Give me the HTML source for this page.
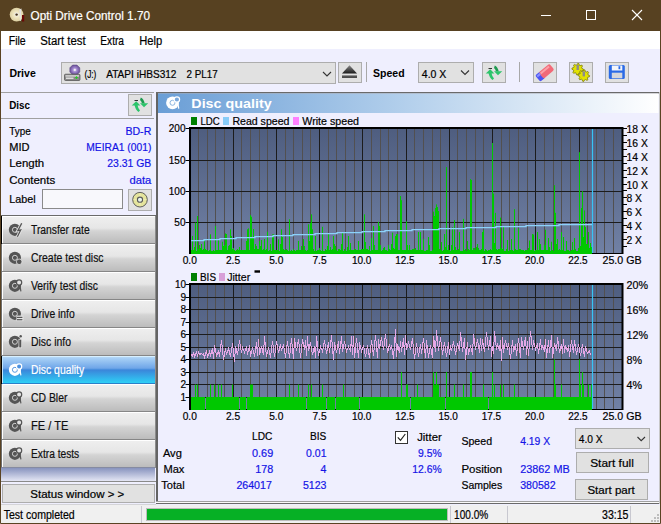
<!DOCTYPE html>
<html><head><meta charset="utf-8"><style>
html,body{margin:0;padding:0;width:661px;height:524px;overflow:hidden;background:#efeffe;}
svg{display:block;}
</style></head><body><svg width="661" height="524" viewBox="0 0 661 524" font-family='"Liberation Sans", sans-serif'><defs>
<linearGradient id="gBtn" x1="0" y1="0" x2="0" y2="1">
 <stop offset="0" stop-color="#efefef"/><stop offset="0.45" stop-color="#e6e6e6"/><stop offset="0.55" stop-color="#d4d4d4"/><stop offset="1" stop-color="#bcbcbc"/>
</linearGradient>
<linearGradient id="gSel" x1="0" y1="0" x2="0" y2="1">
 <stop offset="0" stop-color="#c2e0fa"/><stop offset="0.08" stop-color="#a8d0f6"/><stop offset="0.45" stop-color="#6fa6e8"/><stop offset="0.52" stop-color="#3b86da"/><stop offset="1" stop-color="#2ed0f6"/>
</linearGradient>
<linearGradient id="gHdr" x1="0" y1="0" x2="1" y2="0">
 <stop offset="0" stop-color="#6a9ed6"/><stop offset="0.5" stop-color="#b4d0ec"/><stop offset="1" stop-color="#ffffff"/>
</linearGradient>
<linearGradient id="gPlot" x1="0" y1="0" x2="0" y2="1">
 <stop offset="0" stop-color="#4e5d7f"/><stop offset="1" stop-color="#7181a5"/>
</linearGradient>
<linearGradient id="gSide" x1="0" y1="0" x2="0" y2="1">
 <stop offset="0" stop-color="#8490bc"/><stop offset="1" stop-color="#e4e6f4"/>
</linearGradient>
</defs>
<rect x="0" y="0" width="661" height="524" fill="#efeffe" />
<rect x="0" y="0" width="661" height="31" fill="#574121" />
<text x="30.5" y="20.2" font-size="12" fill="#ffffff" font-weight="400" text-anchor="start" textLength="119.5" lengthAdjust="spacingAndGlyphs" stroke="#ffffff" stroke-width="0.2" >Opti Drive Control 1.70</text>
<defs><radialGradient id="gCd" cx="0.5" cy="0.5" r="0.5"><stop offset="0" stop-color="#fff8dc"/><stop offset="1" stop-color="#dccfa0"/></radialGradient></defs>
<circle cx="16.6" cy="14.6" r="6.9" fill="url(#gCd)"/><circle cx="16.6" cy="14.6" r="2" fill="#e8e8e8"/><circle cx="16.6" cy="14.6" r="1.2" fill="#4a3418"/>
<path d="M19.2,9.5 L21.5,8.5 L21.2,12 L20.8,21 L19.8,21 L19.6,12 Z" fill="#e4e4e4"/><rect x="22" y="15" width="2.2" height="6.5" fill="#6a0808"/>
<line x1="541" y1="15.5" x2="551" y2="15.5" stroke="#ffffff" stroke-width="1" />
<rect x="586.5" y="10.5" width="9" height="9" fill="none" stroke="#ffffff" stroke-width="1" />
<line x1="632" y1="10" x2="642" y2="20" stroke="#ffffff" stroke-width="1.1" />
<line x1="642" y1="10" x2="632" y2="20" stroke="#ffffff" stroke-width="1.1" />
<rect x="0" y="31" width="661" height="18" fill="#ffffff" />
<text x="8.7" y="45" font-size="12" fill="#000" font-weight="400" text-anchor="start" textLength="17" lengthAdjust="spacingAndGlyphs" stroke="#000" stroke-width="0.2" >File</text>
<text x="40.2" y="45" font-size="12" fill="#000" font-weight="400" text-anchor="start" textLength="45.5" lengthAdjust="spacingAndGlyphs" stroke="#000" stroke-width="0.2" >Start test</text>
<text x="100.3" y="45" font-size="12" fill="#000" font-weight="400" text-anchor="start" textLength="23.7" lengthAdjust="spacingAndGlyphs" stroke="#000" stroke-width="0.2" >Extra</text>
<text x="139.3" y="45" font-size="12" fill="#000" font-weight="400" text-anchor="start" textLength="23" lengthAdjust="spacingAndGlyphs" stroke="#000" stroke-width="0.2" >Help</text>
<text x="9.4" y="76.9" font-size="11.3" fill="#000" font-weight="700" text-anchor="start" textLength="26.4" lengthAdjust="spacingAndGlyphs" >Drive</text>
<rect x="61.5" y="62.5" width="274" height="21" fill="#e1e1e1" stroke="#adadad" stroke-width="1" />
<text x="84.4" y="77.6" font-size="10.6" fill="#000" font-weight="400" text-anchor="start" textLength="12" lengthAdjust="spacingAndGlyphs" stroke="#000" stroke-width="0.2" >(J:)</text>
<text x="106.2" y="77.6" font-size="10.6" fill="#000" font-weight="400" text-anchor="start" textLength="70.3" lengthAdjust="spacingAndGlyphs" stroke="#000" stroke-width="0.2" >ATAPI iHBS312</text>
<text x="186.5" y="77.6" font-size="10.6" fill="#000" font-weight="400" text-anchor="start" textLength="31.2" lengthAdjust="spacingAndGlyphs" stroke="#000" stroke-width="0.2" >2 PL17</text>
<polyline points="323,72 327,76 331,72" fill="none" stroke="#333" stroke-width="1.1"/>
<defs><radialGradient id="gPur" cx="0.5" cy="0.5" r="0.5"><stop offset="0" stop-color="#d8c8f0"/><stop offset="0.5" stop-color="#9a80c8"/><stop offset="1" stop-color="#6a5098"/></radialGradient><linearGradient id="gEj" x1="0" y1="0" x2="0" y2="1"><stop offset="0" stop-color="#8a8a8a"/><stop offset="1" stop-color="#1a1a1a"/></linearGradient></defs>
<polygon points="72.6,65 77,65 79.8,67.8 79.8,72 77,74.8 72.6,74.8 69.8,72 69.8,67.8" fill="url(#gPur)" stroke="#5a4a80" stroke-width="0.5"/><circle cx="74.8" cy="69.9" r="1.1" fill="#f4f4f4"/>
<rect x="64.5" y="74.2" width="15.5" height="6.3" rx="1" fill="#8a8a8a" stroke="#4a4a4a" stroke-width="0.7"/><rect x="65.5" y="75" width="13.5" height="1.8" fill="#c8c8c8"/><rect x="66" y="77.6" width="7.5" height="1.2" fill="#f0f0f0"/><path d="M76.5,76.3 v2.6 M75.2,77.6 h2.6" stroke="#20d020" stroke-width="1"/>
<rect x="338.5" y="62.5" width="23" height="20" fill="#e1e1e1" stroke="#adadad" stroke-width="1" />
<polygon points="342,73.5 349.5,65.2 357,73.5" fill="url(#gEj)"/><rect x="342" y="75.2" width="15" height="2.6" fill="url(#gEj)"/>
<line x1="366.5" y1="62" x2="366.5" y2="82" stroke="#a8a8a8" stroke-width="1" />
<text x="373" y="76.9" font-size="11.3" fill="#000" font-weight="700" text-anchor="start" textLength="31.6" lengthAdjust="spacingAndGlyphs" >Speed</text>
<rect x="418.5" y="62.5" width="55" height="20" fill="#e1e1e1" stroke="#adadad" stroke-width="1" />
<text x="421.8" y="77.6" font-size="10.6" fill="#000" font-weight="400" text-anchor="start" textLength="24.5" lengthAdjust="spacingAndGlyphs" stroke="#000" stroke-width="0.2" >4.0 X</text>
<polyline points="461,70.5 465,74.5 469,70.5" fill="none" stroke="#333" stroke-width="1.1"/>
<rect x="482.5" y="62.5" width="23" height="20" fill="#e1e1e1" stroke="#adadad" stroke-width="1" />
<path d="M488.5,73 Q489.5,78 492.5,80 L494,78.5 Q492,76.5 491.5,73 Z" fill="#2cc46a"/>
<polygon points="485.7,73.4 490.2,69.2 494.4,73.4" fill="#2cc46a"/>
<path d="M494.8,65.5 Q497.5,66.5 498.8,71.5 L496,71.5 Q495.5,69 494,68 Z" fill="#1e9a50"/>
<polygon points="494,71.2 502.2,71.2 498,75.2" fill="#2cc46a"/>
<rect x="488.5" y="68" width="3.5" height="1" fill="#333"/>
<line x1="519.5" y1="62" x2="519.5" y2="82" stroke="#a8a8a8" stroke-width="1" />
<rect x="533.5" y="62.5" width="23" height="20" fill="#e1e1e1" stroke="#adadad" stroke-width="1" />
<g transform="rotate(-40 545 72.5)"><rect x="535.5" y="68.5" width="7" height="8" rx="1.5" fill="#4a54f4"/><rect x="540" y="68.5" width="14" height="8" rx="2" fill="#f26a78"/><rect x="541" y="69.5" width="11" height="2" fill="#fba0a8"/><rect x="536.5" y="69.5" width="4" height="2" fill="#8a90ff"/></g>
<rect x="569.5" y="62.5" width="23" height="20" fill="#e1e1e1" stroke="#adadad" stroke-width="1" />
<polygon points="583.50,69.20 583.39,70.33 581.67,70.85 581.28,71.59 581.80,73.30 580.92,74.02 579.35,73.17 578.54,73.42 577.70,75.00 576.57,74.89 576.05,73.17 575.31,72.78 573.60,73.30 572.88,72.42 573.73,70.85 573.48,70.04 571.90,69.20 572.01,68.07 573.73,67.55 574.12,66.81 573.60,65.10 574.48,64.38 576.05,65.23 576.86,64.98 577.70,63.40 578.83,63.51 579.35,65.23 580.09,65.62 581.80,65.10 582.52,65.98 581.67,67.55 581.92,68.36" fill="#e2e200" stroke="#707000" stroke-width="0.7"/>
<rect x="576.5" y="65.0" width="2.4" height="5" fill="#8c8c8c"/>
<polygon points="589.60,75.60 589.49,76.73 587.77,77.25 587.38,77.99 587.90,79.70 587.02,80.42 585.45,79.57 584.64,79.82 583.80,81.40 582.67,81.29 582.15,79.57 581.41,79.18 579.70,79.70 578.98,78.82 579.83,77.25 579.58,76.44 578.00,75.60 578.11,74.47 579.83,73.95 580.22,73.21 579.70,71.50 580.58,70.78 582.15,71.63 582.96,71.38 583.80,69.80 584.93,69.91 585.45,71.63 586.19,72.02 587.90,71.50 588.62,72.38 587.77,73.95 588.02,74.76" fill="#e2e200" stroke="#707000" stroke-width="0.7"/>
<rect x="582.5999999999999" y="71.39999999999999" width="2.4" height="5" fill="#8c8c8c"/>
<rect x="605.5" y="62.5" width="23" height="20" fill="#e1e1e1" stroke="#adadad" stroke-width="1" />
<rect x="608.8" y="65" width="16" height="14" rx="1.5" fill="#2a6ae6"/><rect x="611.8" y="65.5" width="10.5" height="5" fill="#f4f6fa"/><rect x="618.5" y="66.2" width="1.8" height="3" fill="#2a6ae6"/><rect x="611.8" y="72.7" width="10.5" height="5.6" fill="#d4d6dc"/>
<line x1="0" y1="92.5" x2="154" y2="92.5" stroke="#a0a0a0" stroke-width="1" />
<text x="9.2" y="108.9" font-size="11.3" fill="#000" font-weight="700" text-anchor="start" textLength="20.8" lengthAdjust="spacingAndGlyphs" >Disc</text>
<rect x="128.5" y="94.5" width="23" height="21" fill="#e1e1e1" stroke="#adadad" stroke-width="1" />
<path d="M134.5,105 Q135.5,110 138.5,112 L140,110.5 Q138,108.5 137.5,105 Z" fill="#2cc46a"/>
<polygon points="131.7,105.4 136.2,101.2 140.4,105.4" fill="#2cc46a"/>
<path d="M140.8,97.5 Q143.5,98.5 144.8,103.5 L142,103.5 Q141.5,101 140,100 Z" fill="#1e9a50"/>
<polygon points="140,103.2 148.2,103.2 144,107.2" fill="#2cc46a"/>
<rect x="134.5" y="100" width="3.5" height="1" fill="#333"/>
<line x1="0" y1="118.5" x2="154" y2="118.5" stroke="#a0a0a0" stroke-width="1" />
<text x="9.2" y="134.8" font-size="10.8" fill="#000" font-weight="400" text-anchor="start" textLength="21.5" lengthAdjust="spacingAndGlyphs" stroke="#000" stroke-width="0.2" >Type</text>
<text x="151.3" y="134.8" font-size="10.8" fill="#1414e6" font-weight="400" text-anchor="end" textLength="25.9" lengthAdjust="spacingAndGlyphs" stroke="#1414e6" stroke-width="0.2" >BD-R</text>
<text x="9.2" y="150.5" font-size="10.8" fill="#000" font-weight="400" text-anchor="start" textLength="20.3" lengthAdjust="spacingAndGlyphs" stroke="#000" stroke-width="0.2" >MID</text>
<text x="151.3" y="150.5" font-size="10.8" fill="#1414e6" font-weight="400" text-anchor="end" textLength="65" lengthAdjust="spacingAndGlyphs" stroke="#1414e6" stroke-width="0.2" >MEIRA1 (001)</text>
<text x="9.2" y="167" font-size="10.8" fill="#000" font-weight="400" text-anchor="start" textLength="35" lengthAdjust="spacingAndGlyphs" stroke="#000" stroke-width="0.2" >Length</text>
<text x="151.3" y="167" font-size="10.8" fill="#1414e6" font-weight="400" text-anchor="end" textLength="44" lengthAdjust="spacingAndGlyphs" stroke="#1414e6" stroke-width="0.2" >23.31 GB</text>
<text x="9.2" y="183.7" font-size="10.8" fill="#000" font-weight="400" text-anchor="start" textLength="46" lengthAdjust="spacingAndGlyphs" stroke="#000" stroke-width="0.2" >Contents</text>
<text x="151.3" y="183.7" font-size="10.8" fill="#1414e6" font-weight="400" text-anchor="end" textLength="21.8" lengthAdjust="spacingAndGlyphs" stroke="#1414e6" stroke-width="0.2" >data</text>
<text x="9.2" y="202.6" font-size="10.8" fill="#000" font-weight="400" text-anchor="start" textLength="26.4" lengthAdjust="spacingAndGlyphs" stroke="#000" stroke-width="0.2" >Label</text>
<rect x="42.5" y="189.5" width="80" height="19" fill="#f8f8fc" stroke="#8a8a8a" stroke-width="1" />
<rect x="128.5" y="189.5" width="23" height="21" fill="#e1e1e1" stroke="#adadad" stroke-width="1" />
<circle cx="140" cy="199.7" r="7.3" fill="#e4e49c" stroke="#505050" stroke-width="0.9"/><path d="M140,192.4 L141.5,199.7 L140,207 L138.5,199.7 Z M132.7,199.7 L140,198.2 L147.3,199.7 L140,201.2 Z" fill="#f6f6c8" opacity="0.6"/><circle cx="140" cy="199.7" r="2.6" fill="#e8f4e8" stroke="#5a5a5a" stroke-width="1.1"/>
<line x1="0" y1="215.5" x2="156" y2="215.5" stroke="#6a6a6a" stroke-width="1" />
<rect x="2" y="216" width="153" height="27" fill="url(#gBtn)" />
<rect x="2" y="216" width="153" height="1" fill="#ffffff" />
<rect x="2" y="216" width="1" height="27" fill="#ffffff" />
<rect x="1" y="243" width="154" height="1" fill="#868686" />
<rect x="1" y="216" width="1" height="28" fill="#000" />
<text x="31" y="233.8" font-size="12" fill="#101010" font-weight="400" text-anchor="start" textLength="58.7" lengthAdjust="spacingAndGlyphs" stroke="#101010" stroke-width="0.2" >Transfer rate</text>
<circle cx="14.9" cy="229.8" r="6.1" fill="#555555"/>
<circle cx="14.9" cy="229.8" r="2.5" fill="none" stroke="#d0d0d0" stroke-width="1"/>
<path d="M21.7,223.3 L17.9,230.60000000000002 L20.7,230.0 L17.4,236.8" fill="none" stroke="#e4e4e4" stroke-width="3"/><path d="M21.7,223.3 L17.9,230.60000000000002 L20.7,230.0 L17.4,236.8" fill="none" stroke="#555555" stroke-width="1.3"/>
<rect x="2" y="244" width="153" height="27" fill="url(#gBtn)" />
<rect x="2" y="244" width="153" height="1" fill="#ffffff" />
<rect x="2" y="244" width="1" height="27" fill="#ffffff" />
<rect x="1" y="271" width="154" height="1" fill="#868686" />
<rect x="1" y="244" width="1" height="28" fill="#6e6e6e" />
<text x="31" y="261.8" font-size="12" fill="#101010" font-weight="400" text-anchor="start" textLength="72.6" lengthAdjust="spacingAndGlyphs" stroke="#101010" stroke-width="0.2" >Create test disc</text>
<circle cx="14.9" cy="257.8" r="6.1" fill="#555555"/>
<circle cx="14.9" cy="257.8" r="2.5" fill="none" stroke="#d0d0d0" stroke-width="1"/>
<circle cx="19.2" cy="261.8" r="2.8" fill="#555555" stroke="#e4e4e4" stroke-width="0.8"/>
<rect x="2" y="272" width="153" height="27" fill="url(#gBtn)" />
<rect x="2" y="272" width="153" height="1" fill="#ffffff" />
<rect x="2" y="272" width="1" height="27" fill="#ffffff" />
<rect x="1" y="299" width="154" height="1" fill="#868686" />
<rect x="1" y="272" width="1" height="28" fill="#6e6e6e" />
<text x="31" y="289.8" font-size="12" fill="#101010" font-weight="400" text-anchor="start" textLength="66.9" lengthAdjust="spacingAndGlyphs" stroke="#101010" stroke-width="0.2" >Verify test disc</text>
<circle cx="14.9" cy="285.8" r="6.1" fill="#555555"/>
<circle cx="14.9" cy="285.8" r="2.5" fill="none" stroke="#d0d0d0" stroke-width="1"/>
<circle cx="19.1" cy="282.5" r="2.6" fill="#e4e4e4" stroke="#555555" stroke-width="1.2"/>
<line x1="19.9" y1="285.3" x2="20.9" y2="291.3" stroke="#555555" stroke-width="1.2"/>
<rect x="2" y="300" width="153" height="27" fill="url(#gBtn)" />
<rect x="2" y="300" width="153" height="1" fill="#ffffff" />
<rect x="2" y="300" width="1" height="27" fill="#ffffff" />
<rect x="1" y="327" width="154" height="1" fill="#868686" />
<rect x="1" y="300" width="1" height="28" fill="#6e6e6e" />
<text x="31" y="317.8" font-size="12" fill="#101010" font-weight="400" text-anchor="start" textLength="43.7" lengthAdjust="spacingAndGlyphs" stroke="#101010" stroke-width="0.2" >Drive info</text>
<circle cx="14.9" cy="313.8" r="6.1" fill="#555555"/>
<circle cx="14.9" cy="313.8" r="2.5" fill="none" stroke="#d0d0d0" stroke-width="1"/>
<rect x="16.4" y="315.6" width="7" height="5.5" fill="#e4e4e4"/><rect x="16.9" y="316.8" width="5.5" height="1.2" fill="#555555"/><rect x="16.9" y="319.1" width="5.5" height="1.2" fill="#555555"/>
<rect x="2" y="328" width="153" height="27" fill="url(#gBtn)" />
<rect x="2" y="328" width="153" height="1" fill="#ffffff" />
<rect x="2" y="328" width="1" height="27" fill="#ffffff" />
<rect x="1" y="355" width="154" height="1" fill="#868686" />
<rect x="1" y="328" width="1" height="28" fill="#6e6e6e" />
<text x="31" y="345.8" font-size="12" fill="#101010" font-weight="400" text-anchor="start" textLength="40" lengthAdjust="spacingAndGlyphs" stroke="#101010" stroke-width="0.2" >Disc info</text>
<circle cx="14.9" cy="341.8" r="6.1" fill="#555555"/>
<circle cx="14.9" cy="341.8" r="2.5" fill="none" stroke="#d0d0d0" stroke-width="1"/>
<rect x="18.9" y="339.3" width="2.8" height="8.5" fill="#555555" stroke="#e4e4e4" stroke-width="0.7"/><circle cx="20.7" cy="336.3" r="1.2" fill="#555555"/>
<rect x="2" y="356" width="153" height="27" fill="url(#gSel)" />
<rect x="2" y="356" width="153" height="1" fill="#d8f0ff" />
<rect x="2" y="356" width="1" height="27" fill="#c0e4fc" />
<rect x="1" y="383" width="154" height="1" fill="#2a80c8" />
<rect x="1" y="356" width="1" height="28" fill="#000" />
<text x="31" y="373.8" font-size="12" fill="#ffffff" font-weight="400" text-anchor="start" textLength="53.2" lengthAdjust="spacingAndGlyphs" stroke="#ffffff" stroke-width="0.2" >Disc quality</text>
<circle cx="14.9" cy="369.8" r="6.1" fill="#ffffff"/>
<circle cx="14.9" cy="369.8" r="2.5" fill="none" stroke="#5a9ae0" stroke-width="1"/>
<circle cx="19.1" cy="366.5" r="2.6" fill="#4a90e0" stroke="#ffffff" stroke-width="1.2"/>
<line x1="19.9" y1="369.3" x2="20.9" y2="375.3" stroke="#ffffff" stroke-width="1.2"/>
<rect x="2" y="384" width="153" height="27" fill="url(#gBtn)" />
<rect x="2" y="384" width="153" height="1" fill="#ffffff" />
<rect x="2" y="384" width="1" height="27" fill="#ffffff" />
<rect x="1" y="411" width="154" height="1" fill="#868686" />
<rect x="1" y="384" width="1" height="28" fill="#6e6e6e" />
<text x="31" y="401.8" font-size="12" fill="#101010" font-weight="400" text-anchor="start" textLength="36.4" lengthAdjust="spacingAndGlyphs" stroke="#101010" stroke-width="0.2" >CD Bler</text>
<circle cx="14.9" cy="397.8" r="6.1" fill="#555555"/>
<circle cx="14.9" cy="397.8" r="2.5" fill="none" stroke="#d0d0d0" stroke-width="1"/>
<circle cx="19.1" cy="394.5" r="2.6" fill="#e4e4e4" stroke="#555555" stroke-width="1.2"/>
<line x1="19.9" y1="397.3" x2="20.9" y2="403.3" stroke="#555555" stroke-width="1.2"/>
<rect x="2" y="412" width="153" height="27" fill="url(#gBtn)" />
<rect x="2" y="412" width="153" height="1" fill="#ffffff" />
<rect x="2" y="412" width="1" height="27" fill="#ffffff" />
<rect x="1" y="439" width="154" height="1" fill="#868686" />
<rect x="1" y="412" width="1" height="28" fill="#6e6e6e" />
<text x="31" y="429.8" font-size="12" fill="#101010" font-weight="400" text-anchor="start" textLength="37.4" lengthAdjust="spacingAndGlyphs" stroke="#101010" stroke-width="0.2" >FE / TE</text>
<circle cx="14.9" cy="425.8" r="6.1" fill="#555555"/>
<circle cx="14.9" cy="425.8" r="2.5" fill="none" stroke="#d0d0d0" stroke-width="1"/>
<circle cx="19.1" cy="422.5" r="2.6" fill="#e4e4e4" stroke="#555555" stroke-width="1.2"/>
<line x1="19.9" y1="425.3" x2="20.9" y2="431.3" stroke="#555555" stroke-width="1.2"/>
<rect x="2" y="440" width="153" height="27" fill="url(#gBtn)" />
<rect x="2" y="440" width="153" height="1" fill="#ffffff" />
<rect x="2" y="440" width="1" height="27" fill="#ffffff" />
<rect x="1" y="467" width="154" height="1" fill="#868686" />
<rect x="1" y="440" width="1" height="28" fill="#6e6e6e" />
<text x="31" y="457.8" font-size="12" fill="#101010" font-weight="400" text-anchor="start" textLength="48.2" lengthAdjust="spacingAndGlyphs" stroke="#101010" stroke-width="0.2" >Extra tests</text>
<circle cx="14.9" cy="453.8" r="6.1" fill="#555555"/>
<circle cx="14.9" cy="453.8" r="2.5" fill="none" stroke="#d0d0d0" stroke-width="1"/>
<circle cx="19.1" cy="450.5" r="2.6" fill="#e4e4e4" stroke="#555555" stroke-width="1.2"/>
<line x1="19.9" y1="453.3" x2="20.9" y2="459.3" stroke="#555555" stroke-width="1.2"/>
<rect x="1" y="467.5" width="154" height="13.5" fill="url(#gSide)" />
<line x1="0" y1="481.5" x2="156" y2="481.5" stroke="#8a8a8a" stroke-width="1" />
<rect x="2.5" y="484.5" width="152" height="18" fill="#e1e1e1" stroke="#adadad" stroke-width="1" />
<text x="30.3" y="497.8" font-size="11" fill="#000" font-weight="400" text-anchor="start" textLength="94" lengthAdjust="spacingAndGlyphs" stroke="#000" stroke-width="0.2" >Status window &gt; &gt;</text>
<rect x="156" y="92" width="2" height="412" fill="#646464" />
<rect x="155" y="216" width="1" height="252" fill="#8c8c8c" />
<rect x="156" y="92" width="504" height="1.5" fill="#6a6a6a" />
<rect x="158" y="93.5" width="500.5" height="19.5" fill="url(#gHdr)" />
<text x="191.3" y="107.7" font-size="13" fill="#ffffff" font-weight="700" text-anchor="start" textLength="80.4" lengthAdjust="spacingAndGlyphs" >Disc quality</text>
<circle cx="172.5" cy="102.8" r="6.4" fill="#ffffff"/><circle cx="172.5" cy="102.8" r="2.5" fill="none" stroke="#8ab4e0" stroke-width="1"/>
<circle cx="176.9" cy="99.5" r="2.7" fill="#7aa8dc" stroke="#fff" stroke-width="1.2"/><line x1="177.7" y1="102.3" x2="178.7" y2="108.6" stroke="#fff" stroke-width="1.3"/>
<rect x="189" y="127" width="434" height="127" fill="url(#gPlot)" />
<line x1="198.5" y1="127" x2="198.5" y2="254" stroke="#525050" stroke-width="1" />
<line x1="207.5" y1="127" x2="207.5" y2="254" stroke="#525050" stroke-width="1" />
<line x1="215.5" y1="127" x2="215.5" y2="254" stroke="#525050" stroke-width="1" />
<line x1="224.5" y1="127" x2="224.5" y2="254" stroke="#525050" stroke-width="1" />
<line x1="233.5" y1="127" x2="233.5" y2="254" stroke="#1c1c1c" stroke-width="1" />
<line x1="241.5" y1="127" x2="241.5" y2="254" stroke="#525050" stroke-width="1" />
<line x1="250.5" y1="127" x2="250.5" y2="254" stroke="#525050" stroke-width="1" />
<line x1="259.5" y1="127" x2="259.5" y2="254" stroke="#525050" stroke-width="1" />
<line x1="267.5" y1="127" x2="267.5" y2="254" stroke="#525050" stroke-width="1" />
<line x1="276.5" y1="127" x2="276.5" y2="254" stroke="#1c1c1c" stroke-width="1" />
<line x1="285.5" y1="127" x2="285.5" y2="254" stroke="#525050" stroke-width="1" />
<line x1="293.5" y1="127" x2="293.5" y2="254" stroke="#525050" stroke-width="1" />
<line x1="302.5" y1="127" x2="302.5" y2="254" stroke="#525050" stroke-width="1" />
<line x1="310.5" y1="127" x2="310.5" y2="254" stroke="#525050" stroke-width="1" />
<line x1="319.5" y1="127" x2="319.5" y2="254" stroke="#1c1c1c" stroke-width="1" />
<line x1="328.5" y1="127" x2="328.5" y2="254" stroke="#525050" stroke-width="1" />
<line x1="336.5" y1="127" x2="336.5" y2="254" stroke="#525050" stroke-width="1" />
<line x1="345.5" y1="127" x2="345.5" y2="254" stroke="#525050" stroke-width="1" />
<line x1="354.5" y1="127" x2="354.5" y2="254" stroke="#525050" stroke-width="1" />
<line x1="362.5" y1="127" x2="362.5" y2="254" stroke="#1c1c1c" stroke-width="1" />
<line x1="371.5" y1="127" x2="371.5" y2="254" stroke="#525050" stroke-width="1" />
<line x1="380.5" y1="127" x2="380.5" y2="254" stroke="#525050" stroke-width="1" />
<line x1="388.5" y1="127" x2="388.5" y2="254" stroke="#525050" stroke-width="1" />
<line x1="397.5" y1="127" x2="397.5" y2="254" stroke="#525050" stroke-width="1" />
<line x1="406.5" y1="127" x2="406.5" y2="254" stroke="#1c1c1c" stroke-width="1" />
<line x1="414.5" y1="127" x2="414.5" y2="254" stroke="#525050" stroke-width="1" />
<line x1="423.5" y1="127" x2="423.5" y2="254" stroke="#525050" stroke-width="1" />
<line x1="432.5" y1="127" x2="432.5" y2="254" stroke="#525050" stroke-width="1" />
<line x1="440.5" y1="127" x2="440.5" y2="254" stroke="#525050" stroke-width="1" />
<line x1="449.5" y1="127" x2="449.5" y2="254" stroke="#1c1c1c" stroke-width="1" />
<line x1="457.5" y1="127" x2="457.5" y2="254" stroke="#525050" stroke-width="1" />
<line x1="466.5" y1="127" x2="466.5" y2="254" stroke="#525050" stroke-width="1" />
<line x1="475.5" y1="127" x2="475.5" y2="254" stroke="#525050" stroke-width="1" />
<line x1="483.5" y1="127" x2="483.5" y2="254" stroke="#525050" stroke-width="1" />
<line x1="492.5" y1="127" x2="492.5" y2="254" stroke="#1c1c1c" stroke-width="1" />
<line x1="501.5" y1="127" x2="501.5" y2="254" stroke="#525050" stroke-width="1" />
<line x1="509.5" y1="127" x2="509.5" y2="254" stroke="#525050" stroke-width="1" />
<line x1="518.5" y1="127" x2="518.5" y2="254" stroke="#525050" stroke-width="1" />
<line x1="527.5" y1="127" x2="527.5" y2="254" stroke="#525050" stroke-width="1" />
<line x1="535.5" y1="127" x2="535.5" y2="254" stroke="#1c1c1c" stroke-width="1" />
<line x1="544.5" y1="127" x2="544.5" y2="254" stroke="#525050" stroke-width="1" />
<line x1="553.5" y1="127" x2="553.5" y2="254" stroke="#525050" stroke-width="1" />
<line x1="561.5" y1="127" x2="561.5" y2="254" stroke="#525050" stroke-width="1" />
<line x1="570.5" y1="127" x2="570.5" y2="254" stroke="#525050" stroke-width="1" />
<line x1="579.5" y1="127" x2="579.5" y2="254" stroke="#1c1c1c" stroke-width="1" />
<line x1="587.5" y1="127" x2="587.5" y2="254" stroke="#525050" stroke-width="1" />
<line x1="596.5" y1="127" x2="596.5" y2="254" stroke="#525050" stroke-width="1" />
<line x1="604.5" y1="127" x2="604.5" y2="254" stroke="#525050" stroke-width="1" />
<line x1="613.5" y1="127" x2="613.5" y2="254" stroke="#525050" stroke-width="1" />
<line x1="189" y1="160.5" x2="623" y2="160.5" stroke="#1c1c1c" stroke-width="1" />
<line x1="189" y1="191.5" x2="623" y2="191.5" stroke="#1c1c1c" stroke-width="1" />
<line x1="189" y1="222.5" x2="623" y2="222.5" stroke="#1c1c1c" stroke-width="1" />
<rect x="189" y="253" width="434" height="1" fill="#000" />
<rect x="189" y="283" width="434" height="127" fill="url(#gPlot)" />
<line x1="198.5" y1="283" x2="198.5" y2="410" stroke="#525050" stroke-width="1" />
<line x1="207.5" y1="283" x2="207.5" y2="410" stroke="#525050" stroke-width="1" />
<line x1="215.5" y1="283" x2="215.5" y2="410" stroke="#525050" stroke-width="1" />
<line x1="224.5" y1="283" x2="224.5" y2="410" stroke="#525050" stroke-width="1" />
<line x1="233.5" y1="283" x2="233.5" y2="410" stroke="#1c1c1c" stroke-width="1" />
<line x1="241.5" y1="283" x2="241.5" y2="410" stroke="#525050" stroke-width="1" />
<line x1="250.5" y1="283" x2="250.5" y2="410" stroke="#525050" stroke-width="1" />
<line x1="259.5" y1="283" x2="259.5" y2="410" stroke="#525050" stroke-width="1" />
<line x1="267.5" y1="283" x2="267.5" y2="410" stroke="#525050" stroke-width="1" />
<line x1="276.5" y1="283" x2="276.5" y2="410" stroke="#1c1c1c" stroke-width="1" />
<line x1="285.5" y1="283" x2="285.5" y2="410" stroke="#525050" stroke-width="1" />
<line x1="293.5" y1="283" x2="293.5" y2="410" stroke="#525050" stroke-width="1" />
<line x1="302.5" y1="283" x2="302.5" y2="410" stroke="#525050" stroke-width="1" />
<line x1="310.5" y1="283" x2="310.5" y2="410" stroke="#525050" stroke-width="1" />
<line x1="319.5" y1="283" x2="319.5" y2="410" stroke="#1c1c1c" stroke-width="1" />
<line x1="328.5" y1="283" x2="328.5" y2="410" stroke="#525050" stroke-width="1" />
<line x1="336.5" y1="283" x2="336.5" y2="410" stroke="#525050" stroke-width="1" />
<line x1="345.5" y1="283" x2="345.5" y2="410" stroke="#525050" stroke-width="1" />
<line x1="354.5" y1="283" x2="354.5" y2="410" stroke="#525050" stroke-width="1" />
<line x1="362.5" y1="283" x2="362.5" y2="410" stroke="#1c1c1c" stroke-width="1" />
<line x1="371.5" y1="283" x2="371.5" y2="410" stroke="#525050" stroke-width="1" />
<line x1="380.5" y1="283" x2="380.5" y2="410" stroke="#525050" stroke-width="1" />
<line x1="388.5" y1="283" x2="388.5" y2="410" stroke="#525050" stroke-width="1" />
<line x1="397.5" y1="283" x2="397.5" y2="410" stroke="#525050" stroke-width="1" />
<line x1="406.5" y1="283" x2="406.5" y2="410" stroke="#1c1c1c" stroke-width="1" />
<line x1="414.5" y1="283" x2="414.5" y2="410" stroke="#525050" stroke-width="1" />
<line x1="423.5" y1="283" x2="423.5" y2="410" stroke="#525050" stroke-width="1" />
<line x1="432.5" y1="283" x2="432.5" y2="410" stroke="#525050" stroke-width="1" />
<line x1="440.5" y1="283" x2="440.5" y2="410" stroke="#525050" stroke-width="1" />
<line x1="449.5" y1="283" x2="449.5" y2="410" stroke="#1c1c1c" stroke-width="1" />
<line x1="457.5" y1="283" x2="457.5" y2="410" stroke="#525050" stroke-width="1" />
<line x1="466.5" y1="283" x2="466.5" y2="410" stroke="#525050" stroke-width="1" />
<line x1="475.5" y1="283" x2="475.5" y2="410" stroke="#525050" stroke-width="1" />
<line x1="483.5" y1="283" x2="483.5" y2="410" stroke="#525050" stroke-width="1" />
<line x1="492.5" y1="283" x2="492.5" y2="410" stroke="#1c1c1c" stroke-width="1" />
<line x1="501.5" y1="283" x2="501.5" y2="410" stroke="#525050" stroke-width="1" />
<line x1="509.5" y1="283" x2="509.5" y2="410" stroke="#525050" stroke-width="1" />
<line x1="518.5" y1="283" x2="518.5" y2="410" stroke="#525050" stroke-width="1" />
<line x1="527.5" y1="283" x2="527.5" y2="410" stroke="#525050" stroke-width="1" />
<line x1="535.5" y1="283" x2="535.5" y2="410" stroke="#1c1c1c" stroke-width="1" />
<line x1="544.5" y1="283" x2="544.5" y2="410" stroke="#525050" stroke-width="1" />
<line x1="553.5" y1="283" x2="553.5" y2="410" stroke="#525050" stroke-width="1" />
<line x1="561.5" y1="283" x2="561.5" y2="410" stroke="#525050" stroke-width="1" />
<line x1="570.5" y1="283" x2="570.5" y2="410" stroke="#525050" stroke-width="1" />
<line x1="579.5" y1="283" x2="579.5" y2="410" stroke="#1c1c1c" stroke-width="1" />
<line x1="587.5" y1="283" x2="587.5" y2="410" stroke="#525050" stroke-width="1" />
<line x1="596.5" y1="283" x2="596.5" y2="410" stroke="#525050" stroke-width="1" />
<line x1="604.5" y1="283" x2="604.5" y2="410" stroke="#525050" stroke-width="1" />
<line x1="613.5" y1="283" x2="613.5" y2="410" stroke="#525050" stroke-width="1" />
<line x1="189" y1="297.5" x2="623" y2="297.5" stroke="#1c1c1c" stroke-width="1" />
<line x1="189" y1="309.5" x2="623" y2="309.5" stroke="#1c1c1c" stroke-width="1" />
<line x1="189" y1="322.5" x2="623" y2="322.5" stroke="#1c1c1c" stroke-width="1" />
<line x1="189" y1="334.5" x2="623" y2="334.5" stroke="#1c1c1c" stroke-width="1" />
<line x1="189" y1="347.5" x2="623" y2="347.5" stroke="#1c1c1c" stroke-width="1" />
<line x1="189" y1="359.5" x2="623" y2="359.5" stroke="#1c1c1c" stroke-width="1" />
<line x1="189" y1="372.5" x2="623" y2="372.5" stroke="#1c1c1c" stroke-width="1" />
<line x1="189" y1="384.5" x2="623" y2="384.5" stroke="#1c1c1c" stroke-width="1" />
<line x1="189" y1="397.5" x2="623" y2="397.5" stroke="#1c1c1c" stroke-width="1" />
<rect x="189" y="409" width="434" height="1" fill="#000" />
<path d="M190.5,254V250.0M191.5,254V250.0M192.5,254V235.9M193.5,254V250.0M194.5,254V247.0M195.5,254V222.6M196.5,254V251.0M197.5,254V216.0M198.5,254V249.0M199.5,254V245.0M200.5,254V248.0M201.5,254V244.0M202.5,254V250.0M203.5,254V249.0M204.5,254V240.0M205.5,254V249.0M206.5,254V250.0M207.5,254V250.0M208.5,254V251.0M209.5,254V250.0M210.5,254V234.3M211.5,254V251.0M212.5,254V251.0M213.5,254V250.0M214.5,254V251.0M215.5,254V226.0M216.5,254V250.0M217.5,254V250.0M218.5,254V239.3M219.5,254V250.0M220.5,254V250.0M221.5,254V250.0M222.5,254V241.7M223.5,254V246.0M224.5,254V245.0M225.5,254V233.4M226.5,254V234.0M227.5,254V250.0M228.5,254V246.0M229.5,254V245.0M230.5,254V229.3M231.5,254V236.0M232.5,254V249.0M233.5,254V248.0M234.5,254V250.0M235.5,254V251.0M236.5,254V250.0M237.5,254V249.0M238.5,254V250.0M239.5,254V247.0M240.5,254V250.0M241.5,254V250.0M242.5,254V250.0M243.5,254V250.0M244.5,254V250.0M245.5,254V250.0M246.5,254V241.0M247.5,254V229.3M248.5,254V228.4M249.5,254V250.0M250.5,254V215.1M251.5,254V216.8M252.5,254V238.0M253.5,254V229.0M254.5,254V249.0M255.5,254V244.0M256.5,254V246.0M257.5,254V249.0M258.5,254V249.0M259.5,254V241.0M260.5,254V246.0M261.5,254V240.0M262.5,254V250.0M263.5,254V249.0M264.5,254V239.0M265.5,254V250.0M266.5,254V249.0M267.5,254V231.8M268.5,254V251.0M269.5,254V250.0M270.5,254V244.0M271.5,254V251.0M272.5,254V234.3M273.5,254V234.3M274.5,254V250.0M275.5,254V250.0M276.5,254V250.0M277.5,254V250.0M278.5,254V239.3M279.5,254V251.0M280.5,254V244.0M281.5,254V229.3M282.5,254V237.0M283.5,254V249.0M284.5,254V250.0M285.5,254V250.0M286.5,254V249.0M287.5,254V250.0M288.5,254V251.0M289.5,254V219.3M290.5,254V251.0M291.5,254V250.0M292.5,254V251.0M293.5,254V249.0M294.5,254V250.0M295.5,254V251.0M296.5,254V250.0M297.5,254V250.0M298.5,254V240.9M299.5,254V250.0M300.5,254V250.0M301.5,254V246.0M302.5,254V250.0M303.5,254V239.0M304.5,254V246.0M305.5,254V250.0M306.5,254V251.0M307.5,254V250.0M308.5,254V224.3M309.5,254V241.0M310.5,254V222.6M311.5,254V214.3M312.5,254V229.3M313.5,254V249.0M314.5,254V251.0M315.5,254V236.0M316.5,254V251.0M317.5,254V250.0M318.5,254V250.0M319.5,254V248.0M320.5,254V250.0M321.5,254V251.0M322.5,254V226.8M323.5,254V251.0M324.5,254V251.0M325.5,254V249.0M326.5,254V250.0M327.5,254V246.0M328.5,254V233.4M329.5,254V250.0M330.5,254V247.0M331.5,254V250.0M332.5,254V249.0M333.5,254V236.0M334.5,254V244.0M335.5,254V246.0M336.5,254V250.0M337.5,254V251.0M338.5,254V249.0M339.5,254V249.0M340.5,254V250.0M341.5,254V244.0M342.5,254V232.6M343.5,254V251.0M344.5,254V249.0M345.5,254V250.0M346.5,254V251.0M347.5,254V247.0M348.5,254V236.0M349.5,254V250.0M350.5,254V243.0M351.5,254V250.0M352.5,254V250.0M353.5,254V250.0M354.5,254V249.0M355.5,254V249.0M356.5,254V250.0M357.5,254V250.0M358.5,254V241.0M359.5,254V250.0M360.5,254V250.0M361.5,254V249.0M362.5,254V249.0M363.5,254V249.0M364.5,254V214.3M365.5,254V242.0M366.5,254V249.0M367.5,254V249.0M368.5,254V250.0M369.5,254V246.0M370.5,254V251.0M371.5,254V238.0M372.5,254V250.0M373.5,254V226.0M374.5,254V245.0M375.5,254V250.0M376.5,254V250.0M377.5,254V250.0M378.5,254V221.8M379.5,254V226.0M380.5,254V245.0M381.5,254V251.0M382.5,254V250.0M383.5,254V248.0M384.5,254V247.0M385.5,254V250.0M386.5,254V250.0M387.5,254V251.0M388.5,254V245.0M389.5,254V249.0M390.5,254V250.0M391.5,254V244.0M392.5,254V232.6M393.5,254V248.0M394.5,254V249.0M395.5,254V236.0M396.5,254V234.0M397.5,254V234.0M398.5,254V250.0M399.5,254V250.0M400.5,254V196.0M401.5,254V200.2M402.5,254V250.0M403.5,254V250.0M404.5,254V250.0M405.5,254V250.0M406.5,254V221.3M407.5,254V245.0M408.5,254V250.0M409.5,254V245.0M410.5,254V250.0M411.5,254V250.0M412.5,254V249.0M413.5,254V249.0M414.5,254V249.0M415.5,254V248.0M416.5,254V250.0M417.5,254V250.0M418.5,254V232.0M419.5,254V250.0M420.5,254V232.0M421.5,254V250.0M422.5,254V250.0M423.5,254V239.0M424.5,254V251.0M425.5,254V251.0M426.5,254V250.0M427.5,254V250.0M428.5,254V237.0M429.5,254V245.0M430.5,254V251.0M431.5,254V251.0M432.5,254V250.0M433.5,254V211.6M434.5,254V216.0M435.5,254V208.0M436.5,254V204.4M437.5,254V207.0M438.5,254V211.0M439.5,254V249.0M440.5,254V250.0M441.5,254V242.0M442.5,254V251.0M443.5,254V250.0M444.5,254V234.0M445.5,254V247.0M446.5,254V167.1M447.5,254V250.0M448.5,254V245.0M449.5,254V250.0M450.5,254V251.0M451.5,254V245.0M452.5,254V227.3M453.5,254V250.0M454.5,254V220.0M455.5,254V247.0M456.5,254V250.0M457.5,254V250.0M458.5,254V249.0M459.5,254V232.0M460.5,254V251.0M461.5,254V251.0M462.5,254V251.0M463.5,254V218.8M464.5,254V250.0M465.5,254V249.0M466.5,254V251.0M467.5,254V241.0M468.5,254V249.0M469.5,254V250.0M470.5,254V179.1M471.5,254V180.0M472.5,254V250.0M473.5,254V248.0M474.5,254V248.0M475.5,254V250.0M476.5,254V247.0M477.5,254V244.0M478.5,254V248.0M479.5,254V250.0M480.5,254V250.0M481.5,254V249.0M482.5,254V232.0M483.5,254V230.0M484.5,254V251.0M485.5,254V249.0M486.5,254V250.0M487.5,254V251.0M488.5,254V250.0M489.5,254V250.0M490.5,254V249.0M491.5,254V250.0M492.5,254V143.0M493.5,254V193.6M494.5,254V243.0M495.5,254V212.8M496.5,254V249.0M497.5,254V250.0M498.5,254V249.0M499.5,254V249.0M500.5,254V217.6M501.5,254V248.0M502.5,254V249.0M503.5,254V227.0M504.5,254V251.0M505.5,254V251.0M506.5,254V249.0M507.5,254V240.0M508.5,254V251.0M509.5,254V250.0M510.5,254V250.0M511.5,254V239.0M512.5,254V250.0M513.5,254V251.0M514.5,254V209.2M515.5,254V249.0M516.5,254V250.0M517.5,254V250.0M518.5,254V228.5M519.5,254V249.0M520.5,254V249.0M521.5,254V250.0M522.5,254V250.0M523.5,254V250.0M524.5,254V251.0M525.5,254V250.0M526.5,254V250.0M527.5,254V250.0M528.5,254V248.0M529.5,254V240.5M530.5,254V250.0M531.5,254V250.0M532.5,254V234.0M533.5,254V234.5M534.5,254V251.0M535.5,254V250.0M536.5,254V250.0M537.5,254V232.0M538.5,254V250.0M539.5,254V239.0M540.5,254V244.0M541.5,254V250.0M542.5,254V250.0M543.5,254V250.0M544.5,254V245.0M545.5,254V229.7M546.5,254V250.0M547.5,254V250.0M548.5,254V238.0M549.5,254V247.0M550.5,254V251.0M551.5,254V241.7M552.5,254V250.0M553.5,254V251.0M554.5,254V185.2M555.5,254V212.8M556.5,254V244.0M557.5,254V239.0M558.5,254V250.0M559.5,254V249.0M560.5,254V250.0M561.5,254V232.0M562.5,254V250.0M563.5,254V237.0M564.5,254V251.0M565.5,254V251.0M566.5,254V241.0M567.5,254V250.0M568.5,254V250.0M569.5,254V251.0M570.5,254V251.0M571.5,254V250.0M572.5,254V242.0M573.5,254V250.0M574.5,254V238.0M575.5,254V249.0M576.5,254V251.0M577.5,254V251.0M578.5,254V248.0M579.5,254V152.2M580.5,254V246.0M581.5,254V208.0M582.5,254V191.2M583.5,254V237.0M584.5,254V210.4M585.5,254V227.0M586.5,254V244.0M587.5,254V244.0M588.5,254V232.0M589.5,254V248.0M590.5,254V243.0M591.5,254V247.0" stroke="#00c800" stroke-width="1" fill="none"/>
<polyline points="190,240.6 204,240.6 204,239.6 220,239.6 220,238.6 236,238.6 236,237.6 255,237.6 255,236.6 273,236.6 273,235.6 293,235.6 293,234.6 315,234.6 315,233.6 337,233.6 337,232.6 362,232.6 362,231.6 385,231.6 385,230.6 412,230.6 412,229.6 439,229.6 439,228.6 466,228.6 466,227.6 496,227.6 496,226.6 526,226.6 526,225.6 559,225.6 559,224.6 592,224.6" fill="none" stroke="#8cd2fa" stroke-width="1.3"/>
<line x1="592.5" y1="129" x2="592.5" y2="253" stroke="#38c4f4" stroke-width="1.2" />
<path d="M189,127H623V254H189Z" fill="none"/>
<rect x="189" y="127" width="434" height="2" fill="#000" />
<rect x="189" y="127" width="2" height="127" fill="#000" />
<rect x="621.5" y="127" width="2" height="127" fill="#000" />
<path d="M190.5,410V397.0M191.5,410V397.0M192.5,410V397.0M193.5,410V397.0M194.5,410V397.0M195.5,410V384.5M196.5,410V397.0M197.5,410V384.5M198.5,410V397.0M199.5,410V397.0M200.5,410V397.0M201.5,410V397.0M202.5,410V397.0M203.5,410V397.0M204.5,410V397.0M206.5,410V397.0M207.5,410V397.0M208.5,410V397.0M209.5,410V397.0M210.5,410V384.5M211.5,410V397.0M212.5,410V397.0M213.5,410V397.0M214.5,410V384.5M215.5,410V397.0M216.5,410V397.0M217.5,410V397.0M218.5,410V384.5M219.5,410V397.0M220.5,410V397.0M221.5,410V384.5M222.5,410V397.0M223.5,410V397.0M224.5,410V397.0M225.5,410V397.0M226.5,410V397.0M227.5,410V397.0M228.5,410V397.0M229.5,410V397.0M230.5,410V397.0M231.5,410V397.0M232.5,410V384.5M233.5,410V397.0M234.5,410V397.0M235.5,410V397.0M236.5,410V397.0M237.5,410V397.0M238.5,410V397.0M240.5,410V397.0M241.5,410V397.0M242.5,410V397.0M243.5,410V397.0M244.5,410V397.0M245.5,410V397.0M247.5,410V397.0M248.5,410V397.0M249.5,410V397.0M250.5,410V384.5M251.5,410V384.5M252.5,410V384.5M253.5,410V397.0M254.5,410V397.0M255.5,410V397.0M256.5,410V397.0M257.5,410V397.0M258.5,410V397.0M259.5,410V397.0M260.5,410V397.0M261.5,410V397.0M262.5,410V397.0M263.5,410V397.0M264.5,410V397.0M265.5,410V397.0M266.5,410V397.0M267.5,410V397.0M268.5,410V397.0M269.5,410V397.0M270.5,410V397.0M271.5,410V397.0M272.5,410V397.0M273.5,410V397.0M274.5,410V397.0M275.5,410V397.0M276.5,410V397.0M277.5,410V397.0M278.5,410V397.0M279.5,410V397.0M280.5,410V397.0M281.5,410V397.0M282.5,410V397.0M283.5,410V397.0M284.5,410V397.0M285.5,410V397.0M286.5,410V397.0M287.5,410V397.0M288.5,410V397.0M289.5,410V384.5M290.5,410V397.0M291.5,410V397.0M292.5,410V397.0M293.5,410V397.0M294.5,410V397.0M295.5,410V397.0M296.5,410V397.0M297.5,410V397.0M298.5,410V384.5M299.5,410V397.0M300.5,410V397.0M301.5,410V397.0M302.5,410V397.0M303.5,410V397.0M304.5,410V397.0M305.5,410V397.0M307.5,410V397.0M308.5,410V384.5M309.5,410V397.0M310.5,410V397.0M311.5,410V384.5M312.5,410V397.0M313.5,410V397.0M314.5,410V397.0M315.5,410V397.0M316.5,410V397.0M317.5,410V397.0M318.5,410V397.0M319.5,410V397.0M320.5,410V397.0M321.5,410V397.0M322.5,410V384.5M323.5,410V397.0M324.5,410V397.0M325.5,410V397.0M327.5,410V397.0M328.5,410V397.0M329.5,410V397.0M330.5,410V397.0M331.5,410V397.0M332.5,410V397.0M333.5,410V397.0M334.5,410V397.0M336.5,410V397.0M337.5,410V397.0M338.5,410V397.0M339.5,410V397.0M340.5,410V397.0M341.5,410V397.0M342.5,410V397.0M343.5,410V384.5M344.5,410V397.0M345.5,410V397.0M346.5,410V397.0M347.5,410V397.0M348.5,410V397.0M349.5,410V397.0M350.5,410V397.0M351.5,410V397.0M352.5,410V397.0M353.5,410V397.0M354.5,410V397.0M355.5,410V397.0M356.5,410V397.0M357.5,410V397.0M358.5,410V397.0M360.5,410V397.0M361.5,410V397.0M362.5,410V397.0M363.5,410V397.0M364.5,410V397.0M365.5,410V397.0M366.5,410V397.0M367.5,410V397.0M368.5,410V397.0M369.5,410V397.0M370.5,410V397.0M371.5,410V397.0M372.5,410V397.0M373.5,410V397.0M374.5,410V397.0M375.5,410V397.0M376.5,410V397.0M377.5,410V397.0M378.5,410V397.0M379.5,410V397.0M380.5,410V397.0M381.5,410V397.0M382.5,410V397.0M383.5,410V397.0M384.5,410V397.0M385.5,410V397.0M386.5,410V397.0M387.5,410V397.0M388.5,410V397.0M389.5,410V397.0M390.5,410V397.0M391.5,410V397.0M392.5,410V397.0M393.5,410V397.0M394.5,410V397.0M395.5,410V397.0M396.5,410V397.0M397.5,410V397.0M398.5,410V397.0M399.5,410V397.0M400.5,410V397.0M401.5,410V372.0M402.5,410V397.0M403.5,410V397.0M404.5,410V397.0M405.5,410V397.0M406.5,410V384.5M407.5,410V384.5M408.5,410V397.0M409.5,410V397.0M411.5,410V397.0M412.5,410V397.0M413.5,410V397.0M414.5,410V397.0M415.5,410V397.0M416.5,410V397.0M417.5,410V384.5M418.5,410V397.0M419.5,410V397.0M420.5,410V397.0M421.5,410V397.0M422.5,410V397.0M423.5,410V397.0M424.5,410V397.0M425.5,410V397.0M426.5,410V397.0M427.5,410V397.0M428.5,410V397.0M429.5,410V397.0M430.5,410V397.0M431.5,410V397.0M432.5,410V397.0M433.5,410V372.0M434.5,410V384.5M435.5,410V384.5M436.5,410V372.0M437.5,410V384.5M438.5,410V384.5M439.5,410V397.0M440.5,410V397.0M441.5,410V397.0M442.5,410V397.0M443.5,410V397.0M444.5,410V397.0M446.5,410V372.0M447.5,410V397.0M448.5,410V397.0M449.5,410V397.0M450.5,410V397.0M451.5,410V397.0M452.5,410V397.0M453.5,410V397.0M454.5,410V384.5M455.5,410V397.0M456.5,410V397.0M457.5,410V397.0M458.5,410V397.0M459.5,410V397.0M460.5,410V397.0M461.5,410V397.0M462.5,410V397.0M463.5,410V384.5M464.5,410V397.0M465.5,410V397.0M466.5,410V397.0M467.5,410V397.0M468.5,410V397.0M469.5,410V397.0M470.5,410V372.0M471.5,410V372.0M472.5,410V397.0M473.5,410V397.0M474.5,410V397.0M475.5,410V397.0M476.5,410V397.0M477.5,410V397.0M478.5,410V397.0M479.5,410V397.0M480.5,410V397.0M481.5,410V397.0M482.5,410V397.0M483.5,410V384.5M484.5,410V397.0M485.5,410V397.0M486.5,410V397.0M487.5,410V397.0M489.5,410V397.0M490.5,410V397.0M491.5,410V397.0M492.5,410V372.0M493.5,410V397.0M494.5,410V384.5M495.5,410V397.0M496.5,410V397.0M497.5,410V397.0M498.5,410V397.0M499.5,410V397.0M500.5,410V384.5M501.5,410V397.0M502.5,410V397.0M503.5,410V384.5M504.5,410V397.0M505.5,410V397.0M506.5,410V397.0M507.5,410V397.0M508.5,410V397.0M509.5,410V397.0M510.5,410V397.0M511.5,410V397.0M512.5,410V397.0M513.5,410V397.0M514.5,410V384.5M515.5,410V397.0M516.5,410V397.0M517.5,410V397.0M518.5,410V397.0M519.5,410V397.0M520.5,410V397.0M521.5,410V397.0M522.5,410V397.0M523.5,410V397.0M524.5,410V397.0M525.5,410V397.0M526.5,410V397.0M527.5,410V397.0M528.5,410V397.0M529.5,410V397.0M530.5,410V397.0M531.5,410V397.0M532.5,410V397.0M533.5,410V397.0M534.5,410V397.0M535.5,410V397.0M536.5,410V397.0M537.5,410V397.0M538.5,410V397.0M539.5,410V397.0M540.5,410V397.0M541.5,410V397.0M542.5,410V397.0M543.5,410V397.0M544.5,410V397.0M545.5,410V397.0M546.5,410V397.0M547.5,410V397.0M548.5,410V397.0M549.5,410V397.0M550.5,410V397.0M551.5,410V397.0M552.5,410V397.0M553.5,410V397.0M554.5,410V359.5M555.5,410V384.5M556.5,410V397.0M557.5,410V397.0M558.5,410V397.0M559.5,410V397.0M560.5,410V397.0M561.5,410V384.5M562.5,410V397.0M563.5,410V397.0M564.5,410V397.0M565.5,410V397.0M566.5,410V397.0M567.5,410V397.0M568.5,410V397.0M569.5,410V397.0M570.5,410V397.0M571.5,410V397.0M572.5,410V397.0M573.5,410V397.0M574.5,410V397.0M575.5,410V397.0M576.5,410V397.0M577.5,410V397.0M578.5,410V397.0M579.5,410V359.5M580.5,410V384.5M581.5,410V397.0M582.5,410V372.0M583.5,410V384.5M584.5,410V397.0M585.5,410V397.0M586.5,410V397.0M587.5,410V397.0M588.5,410V384.5M589.5,410V397.0M590.5,410V397.0M591.5,410V384.5" stroke="#00c800" stroke-width="1" fill="none"/>
<polyline points="190.5,353.5 192.5,356.5 193.5,352.5 194.5,356.5 196.5,352.5 197.5,355.5 198.5,352.5 199.5,354.5 201.5,353.5 202.5,354.5 203.5,353.5 204.5,357.5 206.5,350.5 207.5,357.5 209.5,351.5 210.5,355.5 212.5,348.5 213.5,358.5 214.5,345.5 216.5,355.5 218.5,351.5 219.5,356.5 221.5,340.5 223.5,359.5 225.5,348.5 226.5,354.5 228.5,348.5 230.5,356.5 232.5,343.5 234.5,361.5 235.5,346.5 237.5,354.5 239.5,340.5 241.5,352.5 242.5,347.5 244.5,352.5 246.5,346.5 247.5,354.5 249.5,345.5 250.5,356.5 252.5,347.5 254.5,356.5 256.5,342.5 257.5,355.5 258.5,339.5 259.5,354.5 261.5,346.5 263.5,354.5 264.5,336.5 266.5,356.5 268.5,347.5 270.5,357.5 272.5,341.5 274.5,356.5 276.5,341.5 278.5,352.5 280.5,344.5 281.5,350.5 283.5,344.5 285.5,357.5 287.5,341.5 289.5,357.5 291.5,338.5 293.5,358.5 294.5,338.5 296.5,350.5 298.5,339.5 300.5,357.5 302.5,339.5 304.5,349.5 305.5,340.5 306.5,355.5 307.5,336.5 308.5,350.5 310.5,342.5 312.5,354.5 314.5,346.5 315.5,357.5 316.5,336.5 318.5,355.5 320.5,346.5 322.5,351.5 324.5,340.5 326.5,353.5 328.5,342.5 329.5,352.5 331.5,335.5 333.5,359.5 334.5,342.5 336.5,352.5 338.5,341.5 339.5,353.5 341.5,336.5 342.5,351.5 344.5,341.5 346.5,351.5 348.5,346.5 350.5,351.5 351.5,336.5 352.5,354.5 353.5,336.5 354.5,357.5 356.5,338.5 358.5,357.5 359.5,342.5 361.5,351.5 363.5,345.5 365.5,356.5 367.5,345.5 369.5,357.5 371.5,340.5 373.5,355.5 375.5,335.5 377.5,357.5 378.5,339.5 379.5,348.5 381.5,337.5 383.5,349.5 385.5,334.5 387.5,352.5 389.5,344.5 390.5,349.5 391.5,345.5 393.5,358.5 395.5,329.5 396.5,356.5 397.5,344.5 399.5,352.5 400.5,341.5 401.5,351.5 403.5,338.5 404.5,354.5 405.5,335.5 406.5,349.5 408.5,342.5 410.5,349.5 412.5,338.5 414.5,358.5 416.5,343.5 418.5,356.5 420.5,344.5 421.5,353.5 423.5,338.5 425.5,357.5 426.5,340.5 428.5,357.5 430.5,345.5 432.5,357.5 433.5,336.5 435.5,351.5 436.5,330.5 438.5,350.5 440.5,337.5 442.5,354.5 444.5,342.5 446.5,356.5 448.5,342.5 449.5,354.5 450.5,345.5 451.5,350.5 453.5,341.5 455.5,354.5 457.5,343.5 459.5,350.5 460.5,332.5 462.5,351.5 464.5,338.5 465.5,359.5 467.5,342.5 468.5,354.5 470.5,345.5 472.5,354.5 473.5,334.5 475.5,349.5 477.5,339.5 479.5,352.5 480.5,338.5 481.5,350.5 482.5,339.5 484.5,351.5 486.5,332.5 488.5,349.5 490.5,336.5 491.5,356.5 492.5,346.5 493.5,353.5 494.5,331.5 496.5,349.5 497.5,344.5 499.5,350.5 500.5,340.5 501.5,360.5 502.5,337.5 503.5,352.5 505.5,340.5 507.5,349.5 508.5,343.5 510.5,358.5 512.5,340.5 513.5,351.5 515.5,344.5 516.5,355.5 518.5,338.5 520.5,357.5 521.5,337.5 523.5,349.5 525.5,337.5 526.5,354.5 527.5,341.5 528.5,355.5 530.5,331.5 532.5,349.5 533.5,340.5 535.5,349.5 537.5,343.5 538.5,353.5 540.5,339.5 541.5,349.5 542.5,346.5 544.5,350.5 545.5,339.5 546.5,357.5 548.5,340.5 549.5,352.5 551.5,335.5 552.5,357.5 554.5,343.5 556.5,350.5 557.5,337.5 559.5,352.5 561.5,344.5 562.5,353.5 563.5,339.5 564.5,352.5 565.5,345.5 567.5,351.5 568.5,345.5 569.5,356.5 571.5,340.5 573.5,352.5 574.5,340.5 576.5,354.5 578.5,344.5 580.5,355.5 582.5,344.5 584.5,356.5 585.5,346.5 587.5,353.5 589.5,350.5 590.5,355.5" fill="none" stroke="#e6a8e6" stroke-width="1" shape-rendering="crispEdges"/>
<line x1="592.5" y1="285" x2="592.5" y2="409" stroke="#38c4f4" stroke-width="1.2" />
<rect x="189" y="283" width="434" height="2" fill="#000" />
<rect x="189" y="283" width="2" height="127" fill="#000" />
<rect x="621.5" y="283" width="2" height="127" fill="#000" />
<text x="185.5" y="132.3" font-size="11" fill="#000" font-weight="400" text-anchor="end" textLength="16.7" lengthAdjust="spacingAndGlyphs" stroke="#000" stroke-width="0.2" >200</text>
<line x1="185.5" y1="128.5" x2="189" y2="128.5" stroke="#000" stroke-width="1" />
<text x="185.5" y="164.3" font-size="11" fill="#000" font-weight="400" text-anchor="end" textLength="16.7" lengthAdjust="spacingAndGlyphs" stroke="#000" stroke-width="0.2" >150</text>
<line x1="185.5" y1="160.5" x2="189" y2="160.5" stroke="#000" stroke-width="1" />
<text x="185.5" y="195.3" font-size="11" fill="#000" font-weight="400" text-anchor="end" textLength="16.7" lengthAdjust="spacingAndGlyphs" stroke="#000" stroke-width="0.2" >100</text>
<line x1="185.5" y1="191.5" x2="189" y2="191.5" stroke="#000" stroke-width="1" />
<text x="185.5" y="226.3" font-size="11" fill="#000" font-weight="400" text-anchor="end" textLength="11.2" lengthAdjust="spacingAndGlyphs" stroke="#000" stroke-width="0.2" >50</text>
<line x1="185.5" y1="222.5" x2="189" y2="222.5" stroke="#000" stroke-width="1" />
<line x1="623" y1="246.5" x2="627" y2="246.5" stroke="#000" stroke-width="1" />
<line x1="623" y1="239.5" x2="627" y2="239.5" stroke="#000" stroke-width="1" />
<text x="626.5" y="243.5" font-size="11" fill="#000" font-weight="400" text-anchor="start" textLength="15.5" lengthAdjust="spacingAndGlyphs" stroke="#000" stroke-width="0.2" >2 X</text>
<line x1="623" y1="232.5" x2="627" y2="232.5" stroke="#000" stroke-width="1" />
<line x1="623" y1="225.5" x2="627" y2="225.5" stroke="#000" stroke-width="1" />
<text x="626.5" y="229.5" font-size="11" fill="#000" font-weight="400" text-anchor="start" textLength="15.5" lengthAdjust="spacingAndGlyphs" stroke="#000" stroke-width="0.2" >4 X</text>
<line x1="623" y1="218.5" x2="627" y2="218.5" stroke="#000" stroke-width="1" />
<line x1="623" y1="211.5" x2="627" y2="211.5" stroke="#000" stroke-width="1" />
<text x="626.5" y="215.5" font-size="11" fill="#000" font-weight="400" text-anchor="start" textLength="15.5" lengthAdjust="spacingAndGlyphs" stroke="#000" stroke-width="0.2" >6 X</text>
<line x1="623" y1="204.5" x2="627" y2="204.5" stroke="#000" stroke-width="1" />
<line x1="623" y1="197.5" x2="627" y2="197.5" stroke="#000" stroke-width="1" />
<text x="626.5" y="201.5" font-size="11" fill="#000" font-weight="400" text-anchor="start" textLength="15.5" lengthAdjust="spacingAndGlyphs" stroke="#000" stroke-width="0.2" >8 X</text>
<line x1="623" y1="190.5" x2="627" y2="190.5" stroke="#000" stroke-width="1" />
<line x1="623" y1="184.5" x2="627" y2="184.5" stroke="#000" stroke-width="1" />
<text x="626.5" y="188.5" font-size="11" fill="#000" font-weight="400" text-anchor="start" textLength="21.3" lengthAdjust="spacingAndGlyphs" stroke="#000" stroke-width="0.2" >10 X</text>
<line x1="623" y1="177.5" x2="627" y2="177.5" stroke="#000" stroke-width="1" />
<line x1="623" y1="170.5" x2="627" y2="170.5" stroke="#000" stroke-width="1" />
<text x="626.5" y="174.5" font-size="11" fill="#000" font-weight="400" text-anchor="start" textLength="21.3" lengthAdjust="spacingAndGlyphs" stroke="#000" stroke-width="0.2" >12 X</text>
<line x1="623" y1="163.5" x2="627" y2="163.5" stroke="#000" stroke-width="1" />
<line x1="623" y1="156.5" x2="627" y2="156.5" stroke="#000" stroke-width="1" />
<text x="626.5" y="160.5" font-size="11" fill="#000" font-weight="400" text-anchor="start" textLength="21.3" lengthAdjust="spacingAndGlyphs" stroke="#000" stroke-width="0.2" >14 X</text>
<line x1="623" y1="149.5" x2="627" y2="149.5" stroke="#000" stroke-width="1" />
<line x1="623" y1="142.5" x2="627" y2="142.5" stroke="#000" stroke-width="1" />
<text x="626.5" y="146.5" font-size="11" fill="#000" font-weight="400" text-anchor="start" textLength="21.3" lengthAdjust="spacingAndGlyphs" stroke="#000" stroke-width="0.2" >16 X</text>
<line x1="623" y1="135.5" x2="627" y2="135.5" stroke="#000" stroke-width="1" />
<line x1="623" y1="128.5" x2="627" y2="128.5" stroke="#000" stroke-width="1" />
<text x="626.5" y="132.5" font-size="11" fill="#000" font-weight="400" text-anchor="start" textLength="21.3" lengthAdjust="spacingAndGlyphs" stroke="#000" stroke-width="0.2" >18 X</text>
<text x="189.8" y="263.7" font-size="11" fill="#000" font-weight="400" text-anchor="middle" textLength="14.2" lengthAdjust="spacingAndGlyphs" stroke="#000" stroke-width="0.2" >0.0</text>
<text x="233.05" y="263.7" font-size="11" fill="#000" font-weight="400" text-anchor="middle" textLength="14.2" lengthAdjust="spacingAndGlyphs" stroke="#000" stroke-width="0.2" >2.5</text>
<text x="276.3" y="263.7" font-size="11" fill="#000" font-weight="400" text-anchor="middle" textLength="14.2" lengthAdjust="spacingAndGlyphs" stroke="#000" stroke-width="0.2" >5.0</text>
<text x="319.55" y="263.7" font-size="11" fill="#000" font-weight="400" text-anchor="middle" textLength="14.2" lengthAdjust="spacingAndGlyphs" stroke="#000" stroke-width="0.2" >7.5</text>
<text x="361.7" y="263.7" font-size="11" fill="#000" font-weight="400" text-anchor="middle" textLength="19.5" lengthAdjust="spacingAndGlyphs" stroke="#000" stroke-width="0.2" >10.0</text>
<text x="404.95" y="263.7" font-size="11" fill="#000" font-weight="400" text-anchor="middle" textLength="19.5" lengthAdjust="spacingAndGlyphs" stroke="#000" stroke-width="0.2" >12.5</text>
<text x="448.2" y="263.7" font-size="11" fill="#000" font-weight="400" text-anchor="middle" textLength="19.5" lengthAdjust="spacingAndGlyphs" stroke="#000" stroke-width="0.2" >15.0</text>
<text x="491.45" y="263.7" font-size="11" fill="#000" font-weight="400" text-anchor="middle" textLength="19.5" lengthAdjust="spacingAndGlyphs" stroke="#000" stroke-width="0.2" >17.5</text>
<text x="534.6999999999999" y="263.7" font-size="11" fill="#000" font-weight="400" text-anchor="middle" textLength="19.5" lengthAdjust="spacingAndGlyphs" stroke="#000" stroke-width="0.2" >20.0</text>
<text x="577.9499999999999" y="263.7" font-size="11" fill="#000" font-weight="400" text-anchor="middle" textLength="19.5" lengthAdjust="spacingAndGlyphs" stroke="#000" stroke-width="0.2" >22.5</text>
<text x="622" y="263.7" font-size="11" fill="#000" font-weight="400" text-anchor="middle" textLength="39" lengthAdjust="spacingAndGlyphs" stroke="#000" stroke-width="0.2" >25.0 GB</text>
<text x="186" y="401.3" font-size="11" fill="#000" font-weight="400" text-anchor="end" textLength="5.6" lengthAdjust="spacingAndGlyphs" stroke="#000" stroke-width="0.2" >1</text>
<line x1="185.5" y1="397.5" x2="189" y2="397.5" stroke="#000" stroke-width="1" />
<text x="186" y="388.3" font-size="11" fill="#000" font-weight="400" text-anchor="end" textLength="5.6" lengthAdjust="spacingAndGlyphs" stroke="#000" stroke-width="0.2" >2</text>
<line x1="185.5" y1="384.5" x2="189" y2="384.5" stroke="#000" stroke-width="1" />
<text x="186" y="376.3" font-size="11" fill="#000" font-weight="400" text-anchor="end" textLength="5.6" lengthAdjust="spacingAndGlyphs" stroke="#000" stroke-width="0.2" >3</text>
<line x1="185.5" y1="372.5" x2="189" y2="372.5" stroke="#000" stroke-width="1" />
<text x="186" y="363.3" font-size="11" fill="#000" font-weight="400" text-anchor="end" textLength="5.6" lengthAdjust="spacingAndGlyphs" stroke="#000" stroke-width="0.2" >4</text>
<line x1="185.5" y1="359.5" x2="189" y2="359.5" stroke="#000" stroke-width="1" />
<text x="186" y="351.3" font-size="11" fill="#000" font-weight="400" text-anchor="end" textLength="5.6" lengthAdjust="spacingAndGlyphs" stroke="#000" stroke-width="0.2" >5</text>
<line x1="185.5" y1="347.5" x2="189" y2="347.5" stroke="#000" stroke-width="1" />
<text x="186" y="338.3" font-size="11" fill="#000" font-weight="400" text-anchor="end" textLength="5.6" lengthAdjust="spacingAndGlyphs" stroke="#000" stroke-width="0.2" >6</text>
<line x1="185.5" y1="334.5" x2="189" y2="334.5" stroke="#000" stroke-width="1" />
<text x="186" y="326.3" font-size="11" fill="#000" font-weight="400" text-anchor="end" textLength="5.6" lengthAdjust="spacingAndGlyphs" stroke="#000" stroke-width="0.2" >7</text>
<line x1="185.5" y1="322.5" x2="189" y2="322.5" stroke="#000" stroke-width="1" />
<text x="186" y="313.3" font-size="11" fill="#000" font-weight="400" text-anchor="end" textLength="5.6" lengthAdjust="spacingAndGlyphs" stroke="#000" stroke-width="0.2" >8</text>
<line x1="185.5" y1="309.5" x2="189" y2="309.5" stroke="#000" stroke-width="1" />
<text x="186" y="301.3" font-size="11" fill="#000" font-weight="400" text-anchor="end" textLength="5.6" lengthAdjust="spacingAndGlyphs" stroke="#000" stroke-width="0.2" >9</text>
<line x1="185.5" y1="297.5" x2="189" y2="297.5" stroke="#000" stroke-width="1" />
<text x="186" y="288.3" font-size="11" fill="#000" font-weight="400" text-anchor="end" textLength="11" lengthAdjust="spacingAndGlyphs" stroke="#000" stroke-width="0.2" >10</text>
<line x1="185.5" y1="284.5" x2="189" y2="284.5" stroke="#000" stroke-width="1" />
<text x="626.5" y="288.5" font-size="11" fill="#000" font-weight="400" text-anchor="start" textLength="21.5" lengthAdjust="spacingAndGlyphs" stroke="#000" stroke-width="0.2" >20%</text>
<text x="626.5" y="313.5" font-size="11" fill="#000" font-weight="400" text-anchor="start" textLength="21.5" lengthAdjust="spacingAndGlyphs" stroke="#000" stroke-width="0.2" >16%</text>
<text x="626.5" y="338.5" font-size="11" fill="#000" font-weight="400" text-anchor="start" textLength="21.5" lengthAdjust="spacingAndGlyphs" stroke="#000" stroke-width="0.2" >12%</text>
<text x="626.5" y="363.5" font-size="11" fill="#000" font-weight="400" text-anchor="start" textLength="15.5" lengthAdjust="spacingAndGlyphs" stroke="#000" stroke-width="0.2" >8%</text>
<text x="626.5" y="388.5" font-size="11" fill="#000" font-weight="400" text-anchor="start" textLength="15.5" lengthAdjust="spacingAndGlyphs" stroke="#000" stroke-width="0.2" >4%</text>
<text x="189.8" y="419.8" font-size="11" fill="#000" font-weight="400" text-anchor="middle" textLength="14.2" lengthAdjust="spacingAndGlyphs" stroke="#000" stroke-width="0.2" >0.0</text>
<text x="233.05" y="419.8" font-size="11" fill="#000" font-weight="400" text-anchor="middle" textLength="14.2" lengthAdjust="spacingAndGlyphs" stroke="#000" stroke-width="0.2" >2.5</text>
<text x="276.3" y="419.8" font-size="11" fill="#000" font-weight="400" text-anchor="middle" textLength="14.2" lengthAdjust="spacingAndGlyphs" stroke="#000" stroke-width="0.2" >5.0</text>
<text x="319.55" y="419.8" font-size="11" fill="#000" font-weight="400" text-anchor="middle" textLength="14.2" lengthAdjust="spacingAndGlyphs" stroke="#000" stroke-width="0.2" >7.5</text>
<text x="361.7" y="419.8" font-size="11" fill="#000" font-weight="400" text-anchor="middle" textLength="19.5" lengthAdjust="spacingAndGlyphs" stroke="#000" stroke-width="0.2" >10.0</text>
<text x="404.95" y="419.8" font-size="11" fill="#000" font-weight="400" text-anchor="middle" textLength="19.5" lengthAdjust="spacingAndGlyphs" stroke="#000" stroke-width="0.2" >12.5</text>
<text x="448.2" y="419.8" font-size="11" fill="#000" font-weight="400" text-anchor="middle" textLength="19.5" lengthAdjust="spacingAndGlyphs" stroke="#000" stroke-width="0.2" >15.0</text>
<text x="491.45" y="419.8" font-size="11" fill="#000" font-weight="400" text-anchor="middle" textLength="19.5" lengthAdjust="spacingAndGlyphs" stroke="#000" stroke-width="0.2" >17.5</text>
<text x="534.6999999999999" y="419.8" font-size="11" fill="#000" font-weight="400" text-anchor="middle" textLength="19.5" lengthAdjust="spacingAndGlyphs" stroke="#000" stroke-width="0.2" >20.0</text>
<text x="577.9499999999999" y="419.8" font-size="11" fill="#000" font-weight="400" text-anchor="middle" textLength="19.5" lengthAdjust="spacingAndGlyphs" stroke="#000" stroke-width="0.2" >22.5</text>
<text x="622" y="419.8" font-size="11" fill="#000" font-weight="400" text-anchor="middle" textLength="39" lengthAdjust="spacingAndGlyphs" stroke="#000" stroke-width="0.2" >25.0 GB</text>
<rect x="191" y="117" width="6" height="8" fill="#008000" />
<text x="200.5" y="124.9" font-size="11" fill="#000" font-weight="400" text-anchor="start" textLength="19.3" lengthAdjust="spacingAndGlyphs" stroke="#000" stroke-width="0.2" >LDC</text>
<rect x="223" y="117" width="6" height="8" fill="#88ccf8" />
<text x="232.4" y="124.9" font-size="11" fill="#000" font-weight="400" text-anchor="start" textLength="57" lengthAdjust="spacingAndGlyphs" stroke="#000" stroke-width="0.2" >Read speed</text>
<rect x="293" y="117" width="6" height="8" fill="#ff80ff" />
<text x="302.3" y="124.9" font-size="11" fill="#000" font-weight="400" text-anchor="start" textLength="56.7" lengthAdjust="spacingAndGlyphs" stroke="#000" stroke-width="0.2" >Write speed</text>
<rect x="191" y="273" width="6" height="8" fill="#008000" />
<text x="200" y="280.5" font-size="11" fill="#000" font-weight="400" text-anchor="start" textLength="16" lengthAdjust="spacingAndGlyphs" stroke="#000" stroke-width="0.2" >BIS</text>
<rect x="219" y="273" width="6" height="8" fill="#d8a0d8" />
<text x="227.2" y="280.5" font-size="11" fill="#000" font-weight="400" text-anchor="start" textLength="23" lengthAdjust="spacingAndGlyphs" stroke="#000" stroke-width="0.2" >Jitter</text>
<rect x="254.5" y="270.3" width="5.5" height="2.4" fill="#000" />
<text x="252" y="440" font-size="11.5" fill="#000" font-weight="400" text-anchor="start" textLength="20.4" lengthAdjust="spacingAndGlyphs" stroke="#000" stroke-width="0.2" >LDC</text>
<text x="326.3" y="440" font-size="11.5" fill="#000" font-weight="400" text-anchor="end" textLength="16.3" lengthAdjust="spacingAndGlyphs" stroke="#000" stroke-width="0.2" >BIS</text>
<text x="162.9" y="456.9" font-size="11.5" fill="#000" font-weight="400" text-anchor="start" textLength="19" lengthAdjust="spacingAndGlyphs" stroke="#000" stroke-width="0.2" >Avg</text>
<text x="273.2" y="456.9" font-size="11.5" fill="#1414e6" font-weight="400" text-anchor="end" textLength="21.2" lengthAdjust="spacingAndGlyphs" stroke="#1414e6" stroke-width="0.2" >0.69</text>
<text x="326.5" y="456.9" font-size="11.5" fill="#1414e6" font-weight="400" text-anchor="end" textLength="20.4" lengthAdjust="spacingAndGlyphs" stroke="#1414e6" stroke-width="0.2" >0.01</text>
<text x="163.4" y="472.7" font-size="11.5" fill="#000" font-weight="400" text-anchor="start" textLength="21" lengthAdjust="spacingAndGlyphs" stroke="#000" stroke-width="0.2" >Max</text>
<text x="273.2" y="472.7" font-size="11.5" fill="#1414e6" font-weight="400" text-anchor="end" textLength="18" lengthAdjust="spacingAndGlyphs" stroke="#1414e6" stroke-width="0.2" >178</text>
<text x="326.5" y="472.7" font-size="11.5" fill="#1414e6" font-weight="400" text-anchor="end" textLength="5.9" lengthAdjust="spacingAndGlyphs" stroke="#1414e6" stroke-width="0.2" >4</text>
<text x="161.3" y="488.5" font-size="11.5" fill="#000" font-weight="400" text-anchor="start" textLength="23.4" lengthAdjust="spacingAndGlyphs" stroke="#000" stroke-width="0.2" >Total</text>
<text x="271.8" y="488.5" font-size="11.5" fill="#1414e6" font-weight="400" text-anchor="end" textLength="35.4" lengthAdjust="spacingAndGlyphs" stroke="#1414e6" stroke-width="0.2" >264017</text>
<text x="326.5" y="488.5" font-size="11.5" fill="#1414e6" font-weight="400" text-anchor="end" textLength="23.6" lengthAdjust="spacingAndGlyphs" stroke="#1414e6" stroke-width="0.2" >5123</text>
<rect x="395.5" y="431.5" width="12" height="12" fill="#ffffff" stroke="#333" stroke-width="1" />
<polyline points="397.8,437.3 400.5,440.3 405.3,434" fill="none" stroke="#222" stroke-width="1.2"/>
<text x="417.2" y="440.8" font-size="11.5" fill="#000" font-weight="400" text-anchor="start" textLength="24.5" lengthAdjust="spacingAndGlyphs" stroke="#000" stroke-width="0.2" >Jitter</text>
<text x="441.7" y="457.1" font-size="11.5" fill="#1414e6" font-weight="400" text-anchor="end" textLength="23.7" lengthAdjust="spacingAndGlyphs" stroke="#1414e6" stroke-width="0.2" >9.5%</text>
<text x="441.7" y="473.2" font-size="11.5" fill="#1414e6" font-weight="400" text-anchor="end" textLength="29.4" lengthAdjust="spacingAndGlyphs" stroke="#1414e6" stroke-width="0.2" >12.6%</text>
<text x="461.4" y="444.6" font-size="11.5" fill="#000" font-weight="400" text-anchor="start" textLength="30.7" lengthAdjust="spacingAndGlyphs" stroke="#000" stroke-width="0.2" >Speed</text>
<text x="520.2" y="444.6" font-size="11.5" fill="#1414e6" font-weight="400" text-anchor="start" textLength="29.9" lengthAdjust="spacingAndGlyphs" stroke="#1414e6" stroke-width="0.2" >4.19 X</text>
<text x="461.4" y="472.7" font-size="11.5" fill="#000" font-weight="400" text-anchor="start" textLength="40.8" lengthAdjust="spacingAndGlyphs" stroke="#000" stroke-width="0.2" >Position</text>
<text x="520.2" y="472.7" font-size="11.5" fill="#1414e6" font-weight="400" text-anchor="start" textLength="49.5" lengthAdjust="spacingAndGlyphs" stroke="#1414e6" stroke-width="0.2" >23862 MB</text>
<text x="461.4" y="488.5" font-size="11.5" fill="#000" font-weight="400" text-anchor="start" textLength="40.8" lengthAdjust="spacingAndGlyphs" stroke="#000" stroke-width="0.2" >Samples</text>
<text x="520.2" y="488.5" font-size="11.5" fill="#1414e6" font-weight="400" text-anchor="start" textLength="35.4" lengthAdjust="spacingAndGlyphs" stroke="#1414e6" stroke-width="0.2" >380582</text>
<rect x="575.5" y="428.5" width="74" height="20" fill="#e1e1e1" stroke="#adadad" stroke-width="1" />
<text x="578.8" y="442.8" font-size="11.5" fill="#000" font-weight="400" text-anchor="start" textLength="23.9" lengthAdjust="spacingAndGlyphs" stroke="#000" stroke-width="0.2" >4.0 X</text>
<polyline points="637.5,437 641.2,440.7 645,437" fill="none" stroke="#333" stroke-width="1.1"/>
<rect x="576.5" y="452.5" width="72" height="20" fill="#e1e1e1" stroke="#adadad" stroke-width="1" />
<text x="590.2" y="467.3" font-size="11.5" fill="#000" font-weight="400" text-anchor="start" textLength="43.6" lengthAdjust="spacingAndGlyphs" stroke="#000" stroke-width="0.2" >Start full</text>
<rect x="575.5" y="479.5" width="72" height="20" fill="#e1e1e1" stroke="#adadad" stroke-width="1" />
<text x="587.4" y="494.1" font-size="11.5" fill="#000" font-weight="400" text-anchor="start" textLength="47.4" lengthAdjust="spacingAndGlyphs" stroke="#000" stroke-width="0.2" >Start part</text>
<line x1="156" y1="501.5" x2="660" y2="501.5" stroke="#a0a0a0" stroke-width="1" />
<line x1="156" y1="502.5" x2="660" y2="502.5" stroke="#fafafa" stroke-width="1" />
<line x1="156" y1="503.5" x2="660" y2="503.5" stroke="#6a6a6a" stroke-width="1.2" />
<line x1="659.5" y1="92" x2="659.5" y2="504" stroke="#c8c8c8" stroke-width="1" />
<rect x="1" y="505" width="659" height="18.5" fill="#f0f0f0" />
<line x1="0" y1="504.5" x2="156" y2="504.5" stroke="#d4d4d8" stroke-width="1" />
<text x="3.7" y="519" font-size="12" fill="#000" font-weight="400" text-anchor="start" textLength="71" lengthAdjust="spacingAndGlyphs" stroke="#000" stroke-width="0.2" >Test completed</text>
<line x1="141.5" y1="506" x2="141.5" y2="523" stroke="#c8c8d0" stroke-width="1" />
<rect x="146.5" y="508.5" width="301" height="12" fill="#e6e6e6" stroke="#bcbcbc" stroke-width="1" />
<rect x="147" y="509" width="300" height="11" fill="#06b025" />
<line x1="450.5" y1="506" x2="450.5" y2="523" stroke="#c8c8d0" stroke-width="1" />
<text x="454.1" y="518.9" font-size="12" fill="#000" font-weight="400" text-anchor="start" textLength="34.2" lengthAdjust="spacingAndGlyphs" stroke="#000" stroke-width="0.2" >100.0%</text>
<line x1="507.5" y1="506" x2="507.5" y2="523" stroke="#c8c8d0" stroke-width="1" />
<text x="628.5" y="518.6" font-size="12" fill="#000" font-weight="400" text-anchor="end" textLength="26.5" lengthAdjust="spacingAndGlyphs" stroke="#000" stroke-width="0.2" >33:15</text>
<line x1="630.5" y1="506" x2="630.5" y2="523" stroke="#c8c8d0" stroke-width="1" />
<rect x="657" y="520" width="2" height="2" fill="#bdbdbd" />
<rect x="657" y="517" width="2" height="2" fill="#bdbdbd" />
<rect x="654" y="520" width="2" height="2" fill="#bdbdbd" />
<rect x="657" y="514" width="2" height="2" fill="#bdbdbd" />
<rect x="654" y="517" width="2" height="2" fill="#bdbdbd" />
<rect x="651" y="520" width="2" height="2" fill="#bdbdbd" />
<path d="M0.5,30 V523.5 H660.5 V30" fill="none" stroke="#5a4323" stroke-width="1"/></svg></body></html>
